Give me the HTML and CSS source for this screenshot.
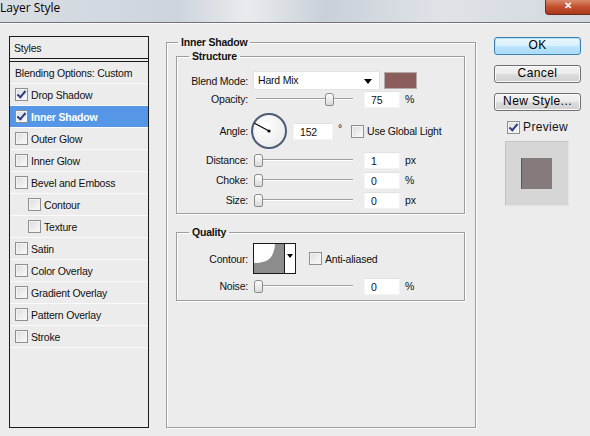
FILE: index.html
```html
<!DOCTYPE html>
<html lang="en">
<head>
<meta charset="UTF-8" />
<title>Layer Style</title>
<link rel="stylesheet" href="styles.css">
</head>
<body>

<div class="titlebar">
  <span class="title">Layer Style</span>
  <span class="close">✕</span>
</div>

<div class="dialog">

  <!-- left: list of effects -->
  <div class="styles-list">
    <div class="item head">Styles</div>
    <div class="item">Blending Options: Custom</div>
    <div class="item"><span class="cb on"></span>Drop Shadow</div>
    <div class="item selected"><span class="cb on"></span>Inner Shadow</div>
    <div class="item"><span class="cb"></span>Outer Glow</div>
    <div class="item"><span class="cb"></span>Inner Glow</div>
    <div class="item"><span class="cb"></span>Bevel and Emboss</div>
    <div class="item sub"><span class="cb"></span>Contour</div>
    <div class="item sub"><span class="cb"></span>Texture</div>
    <div class="item"><span class="cb"></span>Satin</div>
    <div class="item"><span class="cb"></span>Color Overlay</div>
    <div class="item"><span class="cb"></span>Gradient Overlay</div>
    <div class="item"><span class="cb"></span>Pattern Overlay</div>
    <div class="item"><span class="cb"></span>Stroke</div>
  </div>

  <!-- middle: settings -->
  <fieldset class="group main">
    <legend>Inner Shadow</legend>
    <div class="main-body">

      <fieldset class="group">
        <legend>Structure</legend>
        <div class="rows structure">
          <div class="row blend">
            <span class="lbl">Blend Mode:</span>
            <span class="select">Hard Mix<span class="arrow"></span></span>
            <span class="swatch"></span>
          </div>
          <div class="row">
            <span class="lbl">Opacity:</span>
            <span class="slider"><span class="thumb" style="left: 72px"></span></span>
            <span class="field">75</span>
            <span class="unit">%</span>
          </div>
          <div class="row angle">
            <span class="lbl">Angle:</span>
            <span class="dial">
              <svg width="32" height="32" viewBox="0 0 32 32">
                <line x1="16" y1="16" x2="1.5" y2="8.3" stroke="#000" stroke-width="1.2"/>
                <circle cx="16" cy="16" r="1.6" fill="#000"/>
              </svg>
            </span>
            <span class="field wide">152</span>
            <span class="deg">°</span>
            <span class="cb"></span>
            <span class="cb-text">Use Global Light</span>
          </div>
          <div class="row">
            <span class="lbl">Distance:</span>
            <span class="slider"><span class="thumb" style="left: 1px"></span></span>
            <span class="field">1</span>
            <span class="unit">px</span>
          </div>
          <div class="row">
            <span class="lbl">Choke:</span>
            <span class="slider"><span class="thumb" style="left: 1px"></span></span>
            <span class="field">0</span>
            <span class="unit">%</span>
          </div>
          <div class="row">
            <span class="lbl">Size:</span>
            <span class="slider"><span class="thumb" style="left: 1px"></span></span>
            <span class="field">0</span>
            <span class="unit">px</span>
          </div>
        </div>
      </fieldset>

      <fieldset class="group quality">
        <legend>Quality</legend>
        <div class="rows">
          <div class="row contour">
            <span class="lbl">Contour:</span>
            <span class="curve">
              <svg width="30" height="29" viewBox="0 0 30 29">
                <rect width="30" height="29" fill="#fff"/>
                <path d="M0 29 L0 19 C14 19 20 14 21 0 L30 0 L30 29 Z" fill="#8c8c8c"/>
              </svg>
              <span class="curve-arrow"></span>
            </span>
            <span class="cb"></span>
            <span class="cb-text">Anti-aliased</span>
          </div>
          <div class="row">
            <span class="lbl">Noise:</span>
            <span class="slider"><span class="thumb" style="left: 1px"></span></span>
            <span class="field">0</span>
            <span class="unit">%</span>
          </div>
        </div>
      </fieldset>

    </div>
  </fieldset>

  <!-- right: buttons and preview -->
  <div class="actions">
    <div class="btn default">OK</div>
    <div class="btn">Cancel</div>
    <div class="btn">New Style...</div>
    <div class="preview-check"><span class="cb on"></span>Preview</div>
    <div class="preview">
      <div class="preview-square"></div>
    </div>
  </div>

</div>

</body>
</html>
```

FILE: styles.css
```css
body {
  margin: 0;
  width: 590px;
  height: 436px;
  overflow: hidden;
  background: #ececec;
  font-family: "Liberation Sans", Arial, sans-serif;
  font-size: 10.5px;
  letter-spacing: -0.2px;
  color: #111;
}

/* window title */
.titlebar {
  display: flex;
  height: 22px;
  border-bottom: 1px solid #6f7377;
  background: linear-gradient(to right, #d9dee4 0%, #cdd4dc 30%, #e9ecef 42%, #c9d0d8 55%, #dfe3e8 75%, #d2d8df 100%);
  box-shadow: 0 1px 0 #fafafa;
}
.title {
  font-family: "Open Sans", sans-serif;
  font-size: 12px;
  letter-spacing: 0;
  line-height: 16px;
  margin-left: 0;
  color: #000;
}
.close {
  margin-left: auto;
  width: 44px;
  height: 14px;
  background: linear-gradient(#d98a6c, #c2502e 50%, #a8391c);
  border-left: 1px solid #6d2c1c;
  border-bottom: 1px solid #6d2c1c;
  border-radius: 0 0 0 4px;
  color: #fff;
  font-size: 10px;
  line-height: 12px;
  text-align: center;
  font-weight: bold;
}

.dialog {
  display: flex;
  align-items: flex-start;
  padding-left: 9px;
}

/* checkboxes */
.cb {
  display: inline-block;
  box-sizing: border-box;
  width: 13px;
  height: 13px;
  border: 1px solid #8e8f8f;
  background: linear-gradient(135deg, #dcdcdc, #fbfbfb);
  box-shadow: inset 0 0 0 1px #f4f4f4;
  flex-shrink: 0;
  position: relative;
}
.cb.on::after {
  content: "";
  position: absolute;
  left: 3px;
  top: 0px;
  width: 3px;
  height: 7px;
  border: solid #2d3f8a;
  border-width: 0 2px 2px 0;
  transform: rotate(40deg);
}

/* effect list */
.styles-list {
  width: 140px;
  height: 392px;
  box-sizing: border-box;
  margin-top: 13px;
  border: 1px solid #1a1a1a;
}
.item {
  display: flex;
  align-items: center;
  gap: 3px;
  height: 21px;
  padding-left: 5px;
  border-bottom: 1px solid #fbfbfb;
}
.item.head {
  height: 21px;
  padding-left: 4px;
  border-bottom: 4px double #1a1a1a;
}
.item.sub {
  padding-left: 18px;
}
.item.selected {
  background: #5596e6;
  color: #fff;
  font-weight: bold;
}

/* group boxes */
.group {
  margin: 0;
  padding: 0;
  border: 1px solid #9d9d9d;
  box-shadow: inset 1px 1px 0 #fff, 1px 1px 0 #fff;
}
.group legend {
  font-weight: bold;
  line-height: 12px;
  padding: 0 3px;
  margin-left: 11px;
}
.main {
  width: 310px;
  height: 392px;
  box-sizing: border-box;
  margin-top: 13px;
  margin-left: 17px;
}
.main-body {
  padding: 2px 10px 0 9px;
}
.main-body .group legend {
  margin-left: 12px;
}
.quality {
  margin-top: 12px;
}

.rows {
  display: flex;
  flex-direction: column;
  gap: 2px;
  padding: 9px 0 4px;
}
.quality .rows {
  gap: 3px;
  padding: 5px 0 5px;
}
.row {
  display: flex;
  align-items: center;
  height: 18px;
}
.row.blend {
  height: 19px;
  margin-bottom: -2px;
}
.row.angle {
  height: 36px;
  margin: 3px 0 0;
}
.row.contour {
  height: 31px;
}
.lbl {
  width: 71px;
  text-align: right;
  margin-right: 5px;
  flex-shrink: 0;
}

.select {
  position: relative;
  box-sizing: border-box;
  width: 127px;
  height: 19px;
  line-height: 17px;
  padding-left: 4px;
  background: #fff;
  border: 1px solid #e2e2e2;
}
.arrow {
  position: absolute;
  right: 7px;
  top: 7px;
  border: 4px solid transparent;
  border-top: 5px solid #000;
  border-bottom: 0;
}
.swatch {
  width: 31px;
  height: 15px;
  margin-left: 4px;
  background: #8b5d5d;
  border: 1px solid #b5a9a9;
}

.slider {
  position: relative;
  width: 103px;
  height: 14px;
  flex-shrink: 0;
}
.slider::before {
  content: "";
  position: absolute;
  left: 3px;
  right: 3px;
  top: 6px;
  height: 1px;
  background: #9f9f9f;
  box-shadow: 0 1px 0 #fff;
}
.thumb {
  position: absolute;
  top: 1px;
  width: 7px;
  height: 11px;
  border: 1px solid #8b8b8b;
  border-radius: 3px 3px 2px 2px;
  background: linear-gradient(#fdfdfd, #dadada);
}

.field {
  box-sizing: border-box;
  width: 36px;
  height: 17px;
  line-height: 16px;
  padding-left: 6px;
  margin-left: 8px;
  background: #fff;
  border: 1px solid #f3f3f3;
  border-top-color: #e0e0e0;
}
.field.wide {
  width: 40px;
  margin-left: 6px;
}
.unit {
  margin-left: 5px;
}
.deg {
  margin: -6px 0 0 5px;
}
.row .cb {
  margin-left: 9px;
  margin-right: 3px;
}

.dial {
  box-sizing: border-box;
  width: 36px;
  height: 36px;
  margin-left: -2px;
  border: 2px solid #4d5b77;
  border-radius: 50%;
  background: radial-gradient(circle at 40% 35%, #fff, #e6e6e6);
  display: flex;
  align-items: center;
  justify-content: center;
}
.dial svg {
  display: block;
}

.curve {
  display: flex;
  height: 31px;
  box-sizing: border-box;
  border: 1px solid #1a1a1a;
  background: #fff;
}
.curve svg {
  display: block;
}
.curve-arrow {
  width: 10px;
  border-left: 1px solid #1a1a1a;
  position: relative;
}
.curve-arrow::after {
  content: "";
  position: absolute;
  left: 2px;
  top: 10px;
  border: 3px solid transparent;
  border-top: 4px solid #000;
  border-bottom: 0;
}
.contour .cb {
  margin-left: 13px;
}

/* buttons and preview */
.actions {
  width: 87px;
  margin: 14px 0 0 18px;
  display: flex;
  flex-direction: column;
  align-items: center;
}
.btn {
  box-sizing: border-box;
  width: 87px;
  height: 18px;
  margin-bottom: 10px;
  border: 1px solid #707070;
  border-radius: 3px;
  background: linear-gradient(#f3f3f3 0%, #ebebeb 50%, #dddddd 51%, #cfcfcf 100%);
  box-shadow: inset 0 0 0 1px #fcfcfc;
  font-size: 12px;
  line-height: 15px;
  letter-spacing: 0.4px;
  text-align: center;
  color: #000;
}
.btn.default {
  border-color: #3c7fb1;
  background: linear-gradient(#eaf6fd 0%, #d9f0fc 50%, #bee6fd 51%, #a7d9f5 100%);
  box-shadow: inset 0 0 0 1px #b3e0f9;
}
.preview-check {
  display: flex;
  align-items: center;
  gap: 3px;
  font-size: 12px;
  letter-spacing: 0.3px;
  margin-top: -1px;
}
.preview {
  width: 64px;
  height: 65px;
  margin: 7px 2px 0 0;
  box-sizing: border-box;
  background: #d6d6d6;
  border: 1px solid #e2e2e2;
  border-top-color: #c4c4c4;
  border-left-color: #c4c4c4;
  display: flex;
  align-items: center;
  justify-content: center;
}
.preview-square {
  width: 31px;
  height: 31px;
  background: #857b7b;
  border-left: 1px solid #c8262a;
  box-sizing: border-box;
}
```
